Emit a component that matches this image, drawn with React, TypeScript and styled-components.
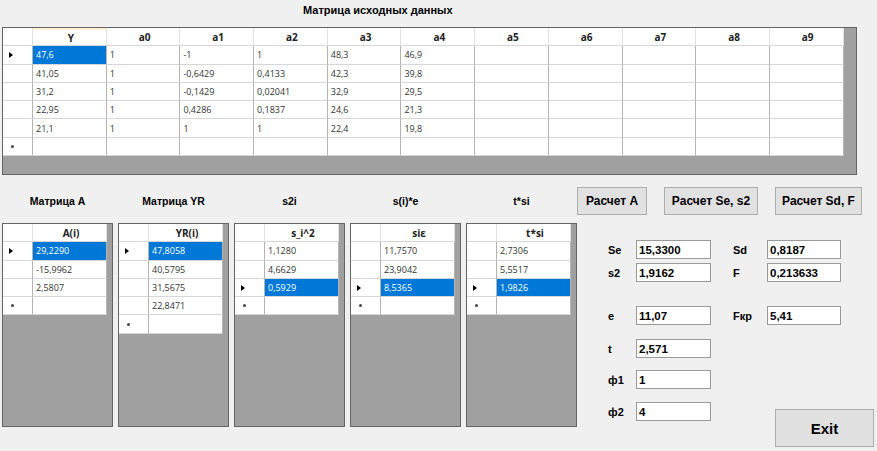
import React from 'react';
import styled, { createGlobalStyle } from 'styled-components';

interface IRow {
  cells: string[];
  marker?: 'current' | 'new';
  selected?: number;
}

interface IGridProps {
  headers: string[];
  columns: string;
  rows: IRow[];
  width: number;
  height: number;
}

const GlobalStyle = createGlobalStyle`
  html, body {
    margin: 0;
    padding: 0;
    background: #f0f0f0;
  }
  body {
    font-family: 'Liberation Sans', Arial, sans-serif;
  }
`;

const Form = styled.div`
  width: 877px;
  height: 451px;
  overflow: hidden;
  background: #f0f0f0;
  display: flex;
  flex-direction: column;
`;

const Caption = styled.div`
  height: 27px;
  box-sizing: border-box;
  padding: 4px 0 0 303px;
  font-size: 11px;
  font-weight: bold;
  color: #000;
`;

const TopRow = styled.div`
  padding-left: 2px;
`;

const GridView = styled.div<{ $width: number; $height: number }>`
  width: ${(p) => p.$width}px;
  height: ${(p) => p.$height}px;
  box-sizing: border-box;
  border: 1px solid #646464;
  background: #a0a0a0;
  overflow: hidden;
  flex-shrink: 0;
`;

const GridTable = styled.div<{ $columns: string }>`
  display: grid;
  grid-template-columns: ${(p) => p.$columns};
  grid-auto-rows: 18.3px;
  width: max-content;
  background: #fff;
`;

type CellKind = 'head' | 'corner' | 'rowhead' | 'data';

const Cell = styled.div<{ $kind: CellKind; $selected?: boolean; $current?: boolean }>`
  box-sizing: border-box;
  display: flex;
  align-items: center;
  justify-content: ${(p) => (p.$kind === 'head' ? 'center' : 'flex-start')};
  padding-left: ${(p) => (p.$kind === 'rowhead' ? '6px' : '3px')};
  font-family: 'Open Sans', 'Noto Sans', sans-serif;
  font-size: ${(p) => (p.$kind === 'head' ? '10px' : '9px')};
  font-weight: ${(p) => (p.$kind === 'head' ? 'bold' : 'normal')};
  color: ${(p) => (p.$selected ? '#fff' : p.$kind === 'head' ? '#222' : '#333')};
  background: ${(p) => (p.$selected ? '#0078d7' : '#fff')};
  border-top: ${(p) => (p.$current ? '2px solid #fdf1d8' : 'none')};
  border-right: 1px solid
    ${(p) => (p.$kind === 'head' || p.$kind === 'corner' ? '#e2e2e2' : '#b4b4b4')};
  border-bottom: 1px solid #d6d6d6;
  white-space: nowrap;
  overflow: hidden;
`;

const CurrentMark = styled.span`
  width: 0;
  height: 0;
  border-left: 4px solid #000;
  border-top: 3.5px solid transparent;
  border-bottom: 3.5px solid transparent;
`;

const NewMark = styled.span`
  width: 3px;
  height: 3px;
  margin-left: 2px;
  border-radius: 50%;
  background: #444;
`;

const DataGrid = ({ headers, columns, rows, width, height }: IGridProps) => {
  const current = rows.find((r) => r.marker === 'current');
  return (
    <GridView $width={width} $height={height}>
      <GridTable $columns={columns}>
        <Cell $kind="corner" />
        {headers.map((h, c) => (
          <Cell key={h} $kind="head" $current={headers.length > 1 && current?.selected === c}>
            {h}
          </Cell>
        ))}
        {rows.map((row, r) => (
          <React.Fragment key={r}>
            <Cell $kind="rowhead">
              {row.marker === 'current' && <CurrentMark />}
              {row.marker === 'new' && <NewMark />}
            </Cell>
            {headers.map((h, c) => (
              <Cell key={h} $kind="data" $selected={row.selected === c}>
                {row.cells[c] ?? ''}
              </Cell>
            ))}
          </React.Fragment>
        ))}
      </GridTable>
    </GridView>
  );
};

const BottomArea = styled.div`
  display: flex;
  padding-left: 2px;
`;

const GridsPane = styled.div`
  display: flex;
  gap: 5px;
`;

const GridColumn = styled.div`
  display: flex;
  flex-direction: column;
  align-items: center;
  padding-top: 19px;
`;

const GridLabel = styled.div`
  height: 14px;
  line-height: 14px;
  margin-bottom: 15px;
  font-size: 10.5px;
  font-weight: bold;
  color: #000;
`;

const ControlsPane = styled.div`
  display: flex;
  flex-direction: column;
`;

const ButtonRow = styled.div`
  display: flex;
  gap: 17px;
  margin-top: 12px;
`;

const FormButton = styled.button<{ $width: number }>`
  width: ${(p) => p.$width}px;
  height: 28px;
  padding: 0;
  background: #e1e1e1;
  border: 1px solid #adadad;
  font-family: 'Liberation Sans', Arial, sans-serif;
  font-size: 12px;
  font-weight: bold;
  color: #000;
`;

const Fields = styled.div`
  display: flex;
  margin-top: 25px;
`;

const FieldColumn = styled.div<{ $offset: number }>`
  display: flex;
  flex-direction: column;
  margin-left: ${(p) => p.$offset}px;
`;

const FieldRow = styled.div<{ $top: number }>`
  display: flex;
  align-items: center;
  margin-top: ${(p) => p.$top}px;
`;

const FieldLabel = styled.div<{ $width: number }>`
  width: ${(p) => p.$width}px;
  font-size: 11px;
  font-weight: bold;
  color: #000;
`;

const FieldBox = styled.div<{ $width: number }>`
  width: ${(p) => p.$width}px;
  height: 19px;
  box-sizing: border-box;
  border: 1px solid #9a9a9a;
  background: #fff;
  padding-left: 2px;
  display: flex;
  align-items: center;
  font-size: 11.5px;
  font-weight: bold;
  color: #000;
`;

const ExitButton = styled.button`
  width: 99px;
  height: 38px;
  margin: 84px 0 0 42px;
  padding: 0;
  background: #e1e1e1;
  border: 1px solid #adadad;
  font-family: 'Liberation Sans', Arial, sans-serif;
  font-size: 15px;
  font-weight: bold;
  color: #000;
`;

const topHeaders = ['Y', 'a0', 'a1', 'a2', 'a3', 'a4', 'a5', 'a6', 'a7', 'a8', 'a9'];

const topRows: IRow[] = [
  { cells: ['47,6', '1', '-1', '1', '48,3', '46,9'], marker: 'current', selected: 0 },
  { cells: ['41,05', '1', '-0,6429', '0,4133', '42,3', '39,8'] },
  { cells: ['31,2', '1', '-0,1429', '0,02041', '32,9', '29,5'] },
  { cells: ['22,95', '1', '0,4286', '0,1837', '24,6', '21,3'] },
  { cells: ['21,1', '1', '1', '1', '22,4', '19,8'] },
  { cells: [], marker: 'new' },
];

const smallGrids: { label: string; header: string; rows: IRow[] }[] = [
  {
    label: 'Матрица A',
    header: 'A(i)',
    rows: [
      { cells: ['29,2290'], marker: 'current', selected: 0 },
      { cells: ['-15,9962'] },
      { cells: ['2,5807'] },
      { cells: [], marker: 'new' },
    ],
  },
  {
    label: 'Матрица YR',
    header: 'YR(i)',
    rows: [
      { cells: ['47,8058'], marker: 'current', selected: 0 },
      { cells: ['40,5795'] },
      { cells: ['31,5675'] },
      { cells: ['22,8471'] },
      { cells: [], marker: 'new' },
    ],
  },
  {
    label: 's2i',
    header: 's_i^2',
    rows: [
      { cells: ['1,1280'] },
      { cells: ['4,6629'] },
      { cells: ['0,5929'], marker: 'current', selected: 0 },
      { cells: [], marker: 'new' },
    ],
  },
  {
    label: 's(i)*e',
    header: 'siε',
    rows: [
      { cells: ['11,7570'] },
      { cells: ['23,9042'] },
      { cells: ['8,5365'], marker: 'current', selected: 0 },
      { cells: [], marker: 'new' },
    ],
  },
  {
    label: 't*si',
    header: 't*si',
    rows: [
      { cells: ['2,7306'] },
      { cells: ['5,5517'] },
      { cells: ['1,9826'], marker: 'current', selected: 0 },
      { cells: [], marker: 'new' },
    ],
  },
];

const leftFields = [
  { label: 'Se', value: '15,3300', top: 0 },
  { label: 's2', value: '1,9162', top: 4 },
  { label: 'e', value: '11,07', top: 24 },
  { label: 't', value: '2,571', top: 14 },
  { label: 'ф1', value: '1', top: 12 },
  { label: 'ф2', value: '4', top: 13 },
];

const rightFields = [
  { label: 'Sd', value: '0,8187', top: 0 },
  { label: 'F', value: '0,213633', top: 4 },
  { label: 'Fкр', value: '5,41', top: 24 },
];

const App = () => (
  <>
    <GlobalStyle />
    <Form>
      <Caption>Матрица исходных данных</Caption>
      <TopRow>
        <DataGrid
          headers={topHeaders}
          columns="30px repeat(11, 73.7px)"
          rows={topRows}
          width={855}
          height={148}
        />
      </TopRow>
      <BottomArea>
        <GridsPane>
          {smallGrids.map((g) => (
            <GridColumn key={g.label}>
              <GridLabel>{g.label}</GridLabel>
              <DataGrid
                headers={[g.header]}
                columns="30px 74px"
                rows={g.rows}
                width={111}
                height={204}
              />
            </GridColumn>
          ))}
        </GridsPane>
        <ControlsPane>
          <ButtonRow>
            <FormButton $width={70}>Расчет A</FormButton>
            <FormButton $width={94}>Расчет Se, s2</FormButton>
            <FormButton $width={87}>Расчет Sd, F</FormButton>
          </ButtonRow>
          <Fields>
            <FieldColumn $offset={31}>
              {leftFields.map((f) => (
                <FieldRow key={f.label} $top={f.top}>
                  <FieldLabel $width={28}>{f.label}</FieldLabel>
                  <FieldBox $width={75}>{f.value}</FieldBox>
                </FieldRow>
              ))}
            </FieldColumn>
            <FieldColumn $offset={22}>
              {rightFields.map((f) => (
                <FieldRow key={f.label} $top={f.top}>
                  <FieldLabel $width={34}>{f.label}</FieldLabel>
                  <FieldBox $width={74}>{f.value}</FieldBox>
                </FieldRow>
              ))}
              <ExitButton>Exit</ExitButton>
            </FieldColumn>
          </Fields>
        </ControlsPane>
      </BottomArea>
    </Form>
  </>
);

export default App;
